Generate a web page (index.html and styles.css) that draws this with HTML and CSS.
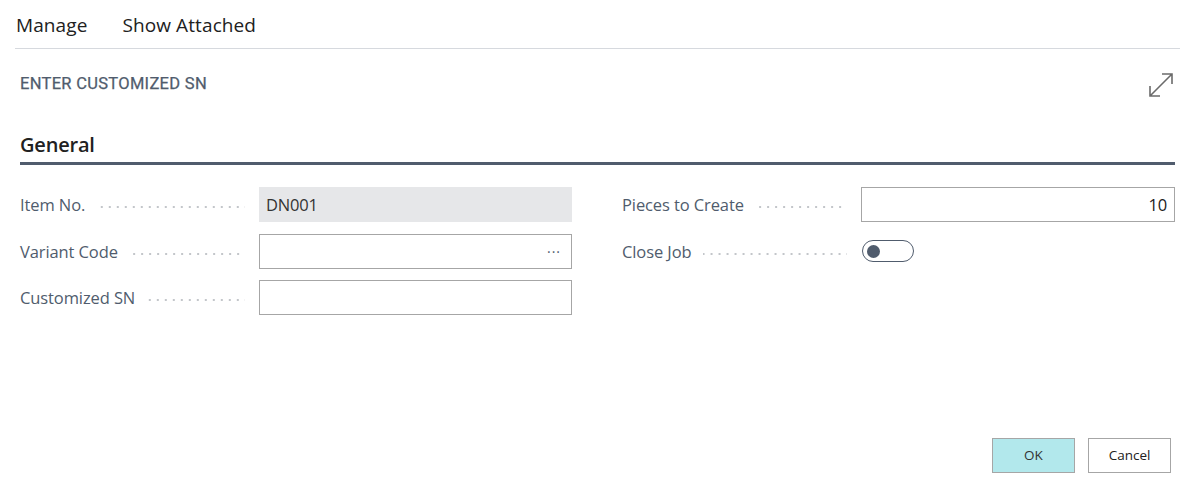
FILE: index.html
```html
<!DOCTYPE html>
<html lang="en">
<head>
    <meta charset="UTF-8">
    <title>Enter Customized SN</title>
    <link rel="stylesheet" href="styles.css">
</head>
<body>

    <div class="action-bar">
        <span class="action">Manage</span>
        <span class="action">Show Attached</span>
    </div>

    <div class="page-header">
        <h1 class="page-title">ENTER CUSTOMIZED SN</h1>
        <svg class="expand" width="26" height="26" viewBox="0 0 26 26">
            <path d="M2 24 L24 2 M14 2 H24 V12 M2 14 V24 H12" fill="none" stroke="#6b6b6b" stroke-width="1.6"/>
        </svg>
    </div>

    <div class="section">
        <h2 class="section-title">General</h2>

        <div class="form-grid">
            <div class="column">
                <div class="field-row">
                    <label class="field-label"><span>Item No.</span><span class="leader"></span></label>
                    <div class="field readonly">DN001</div>
                </div>
                <div class="field-row">
                    <label class="field-label"><span>Variant Code</span><span class="leader"></span></label>
                    <div class="field lookup"><span class="more">&middot;&middot;&middot;</span></div>
                </div>
                <div class="field-row">
                    <label class="field-label"><span>Customized SN</span><span class="leader"></span></label>
                    <div class="field"></div>
                </div>
            </div>
            <div class="column">
                <div class="field-row">
                    <label class="field-label"><span>Pieces to Create</span><span class="leader"></span></label>
                    <div class="field number">10</div>
                </div>
                <div class="field-row">
                    <label class="field-label"><span>Close Job</span><span class="leader"></span></label>
                    <div class="toggle"><span class="knob"></span></div>
                </div>
            </div>
        </div>
    </div>

    <div class="footer">
        <button class="btn primary">OK</button>
        <button class="btn">Cancel</button>
    </div>

</body>
</html>
```

FILE: styles.css
```css
body {
    margin: 0;
    font-family: "Open Sans", "Noto Sans", sans-serif;
    color: #212121;
    background: #fff;
    width: 1192px;
    height: 491px;
    overflow: hidden;
}

.action-bar {
    display: flex;
    gap: 35px;
    height: 48px;
    margin: 0 12px 0 15px;
    padding-left: 1px;
    border-bottom: 1px solid #d6d9de;
    align-items: center;
}
.action {
    font-size: 19px;
    color: #212121;
    letter-spacing: 0.1px;
    position: relative;
    top: 1px;
}

.page-header {
    display: flex;
    justify-content: space-between;
    align-items: center;
    margin: 23px 18px 0 20px;
    height: 26px;
}
.page-title {
    margin: 0;
    font-family: Roboto, "Liberation Sans", sans-serif;
    font-size: 16.5px;
    font-weight: 400;
    color: #505c6d;
    letter-spacing: 0.3px;
    -webkit-text-stroke: 0.25px #505c6d;
    position: relative;
    top: -2px;
}
.expand {
    display: block;
}

.section {
    margin: 33px 17px 0 20px;
}
.section-title {
    margin: 0;
    font-size: 20px;
    font-weight: 600;
    color: #212121;
    letter-spacing: -0.2px;
    line-height: 28px;
    padding-bottom: 3px;
    border-bottom: 3px solid #505c6d;
}

.form-grid {
    display: grid;
    grid-template-columns: 552px 553px;
    gap: 50px;
    margin-top: 22px;
}
.field-row {
    display: flex;
    height: 35px;
    margin-bottom: 11.5px;
    align-items: center;
}
.field-label {
    width: 239px;
    flex-shrink: 0;
    display: flex;
    align-items: center;
    font-size: 16.5px;
    color: #505c6d;
    letter-spacing: -0.1px;
    padding-right: 14px;
    box-sizing: border-box;
}
.leader {
    flex: 1;
    height: 2px;
    margin-left: 12px;
    margin-top: 5px;
    background-image: linear-gradient(to right, #c3c6ca 2px, transparent 2px);
    background-size: 8px 2px;
    background-position: right center;
}

.field {
    flex: 1;
    height: 35px;
    box-sizing: border-box;
    border: 1px solid #a6a6a6;
    font-size: 16.5px;
    padding: 0 6px;
    display: flex;
    align-items: center;
    color: #212121;
    letter-spacing: -0.2px;
}
.field.readonly {
    background: #e6e7e9;
    border-color: #e6e7e9;
    color: #333;
}
.field.lookup {
    justify-content: flex-end;
    padding-right: 10px;
}
.more {
    font-size: 14px;
    color: #505c6d;
    letter-spacing: 1px;
}
.field.number {
    justify-content: flex-end;
    padding-right: 7px;
}

.toggle {
    width: 52px;
    height: 22px;
    box-sizing: border-box;
    border: 1px solid #505c6d;
    border-radius: 11px;
    display: flex;
    align-items: center;
    padding-left: 4px;
    margin-left: 1px;
}
.knob {
    width: 13px;
    height: 13px;
    border-radius: 50%;
    background: #505c6d;
}

.footer {
    display: flex;
    justify-content: flex-end;
    gap: 13px;
    margin: 111px 21px 0 0;
}
.btn {
    width: 83px;
    height: 35px;
    border: 1px solid #a6a6a6;
    background: #fff;
    font-family: "Open Sans", "Noto Sans", sans-serif;
    font-size: 13.5px;
    color: #212121;
    padding: 0;
    cursor: pointer;
}
.btn.primary {
    background: #b2e8ec;
    color: #333;
}
```
